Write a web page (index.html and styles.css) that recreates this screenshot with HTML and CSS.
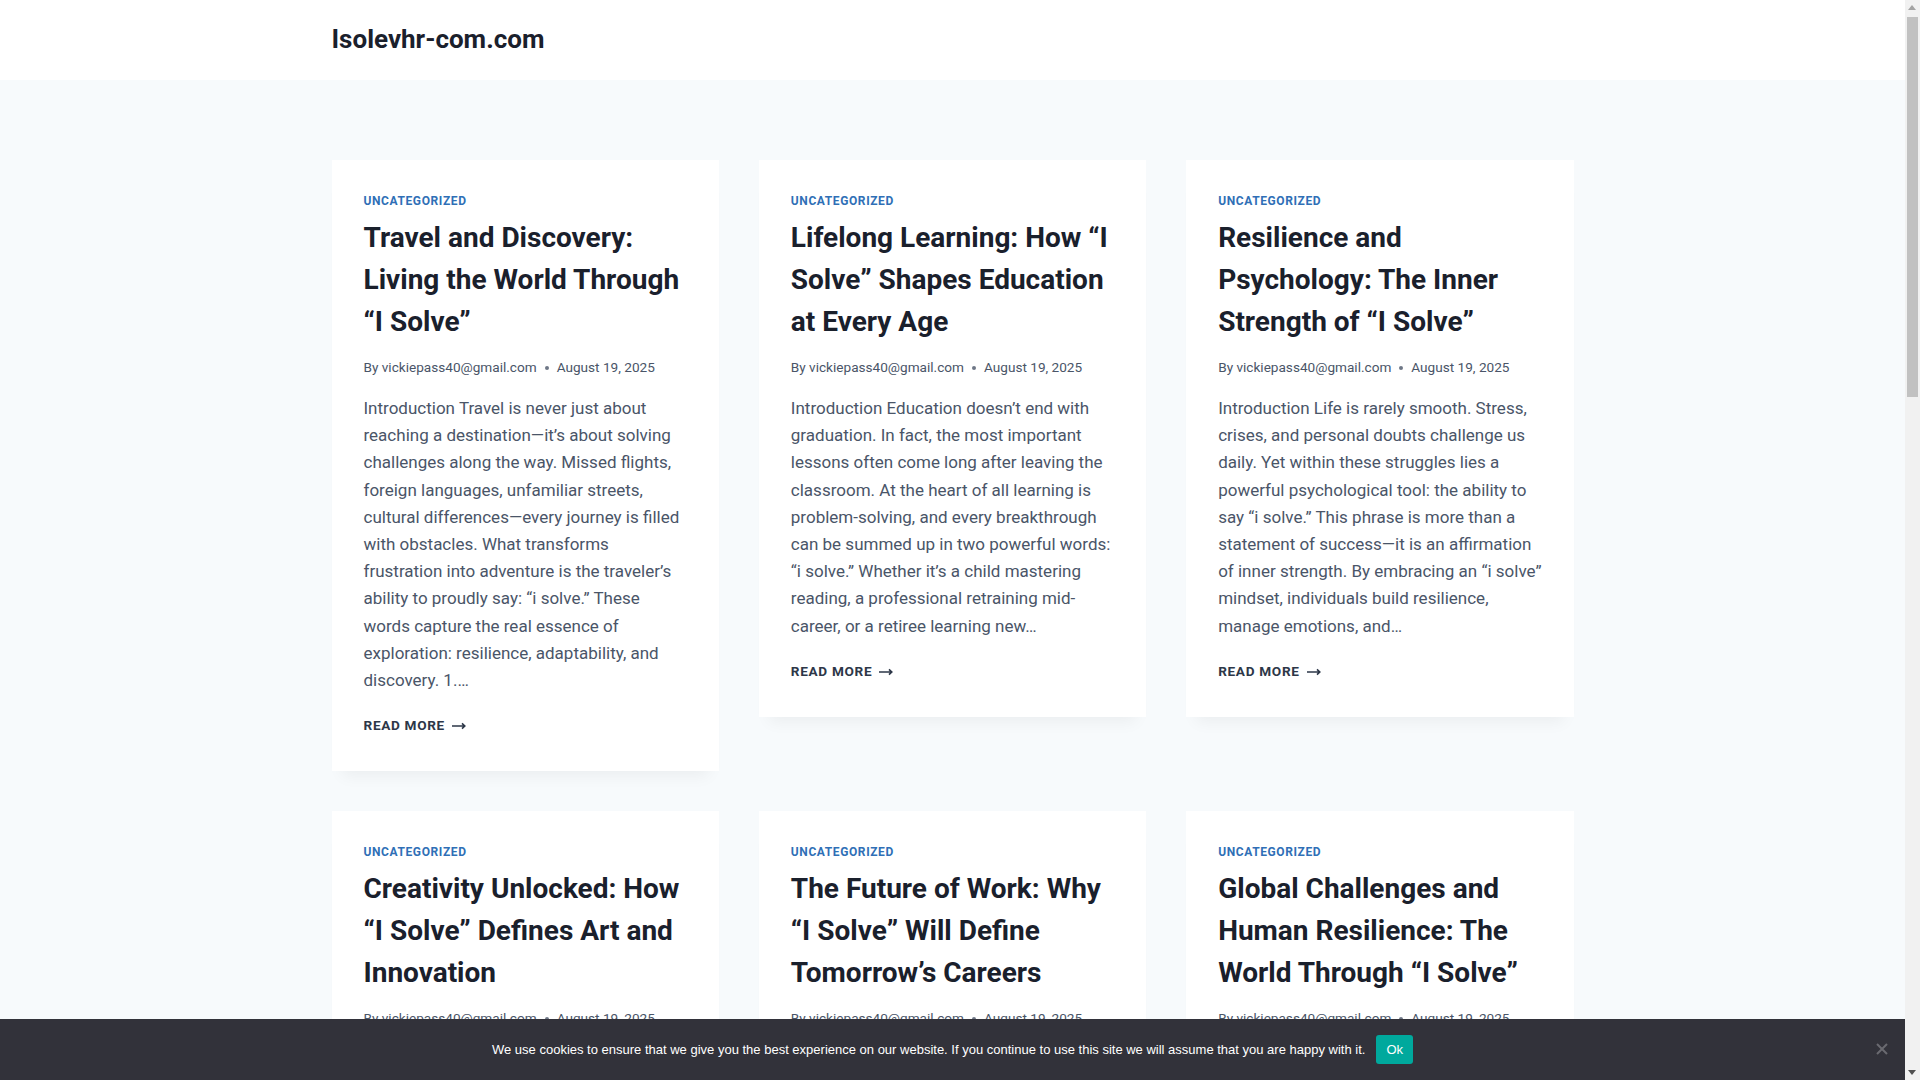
FILE: index.html
```html
<!DOCTYPE html>
<html lang="en">
<head>
<meta charset="utf-8">
<title>Isolevhr-com.com</title>
<link rel="stylesheet" href="styles.css">
</head>
<body>
<div class="page">
<header class="site-header">
  <div class="container header-inner">
    <a class="site-title" href="#">Isolevhr-com.com</a>
  </div>
</header>

<main class="site-main">
  <div class="container">
    <div class="post-grid">

      <article class="card">
        <div class="cat">Uncategorized</div>
        <h2 class="entry-title">Travel and Discovery: Living the World Through “I Solve”</h2>
        <div class="meta"><span>By vickiepass40@gmail.com</span><span class="dot"></span><span>August 19, 2025</span></div>
        <p class="excerpt">Introduction Travel is never just about reaching a destination—it’s about solving challenges along the way. Missed flights, foreign languages, unfamiliar streets, cultural differences—every journey is filled with obstacles. What transforms frustration into adventure is the traveler’s ability to proudly say: “i solve.” These words capture the real essence of exploration: resilience, adaptability, and discovery. 1.…</p>
        <div class="more"><span>Read More</span><svg class="arrow" viewBox="0 0 14 8" width="14" height="8"><path d="M0 4h12.8M10 1.3l2.8 2.7-2.8 2.7" fill="none" stroke="currentColor" stroke-width="1.6"/></svg></div>
      </article>

      <article class="card">
        <div class="cat">Uncategorized</div>
        <h2 class="entry-title">Lifelong Learning: How “I Solve” Shapes Education at Every Age</h2>
        <div class="meta"><span>By vickiepass40@gmail.com</span><span class="dot"></span><span>August 19, 2025</span></div>
        <p class="excerpt">Introduction Education doesn’t end with graduation. In fact, the most important lessons often come long after leaving the classroom. At the heart of all learning is problem-solving, and every breakthrough can be summed up in two powerful words: “i solve.” Whether it’s a child mastering reading, a professional retraining mid-career, or a retiree learning new…</p>
        <div class="more"><span>Read More</span><svg class="arrow" viewBox="0 0 14 8" width="14" height="8"><path d="M0 4h12.8M10 1.3l2.8 2.7-2.8 2.7" fill="none" stroke="currentColor" stroke-width="1.6"/></svg></div>
      </article>

      <article class="card">
        <div class="cat">Uncategorized</div>
        <h2 class="entry-title">Resilience and Psychology: The Inner Strength of “I Solve”</h2>
        <div class="meta"><span>By vickiepass40@gmail.com</span><span class="dot"></span><span>August 19, 2025</span></div>
        <p class="excerpt">Introduction Life is rarely smooth. Stress, crises, and personal doubts challenge us daily. Yet within these struggles lies a powerful psychological tool: the ability to say “i solve.” This phrase is more than a statement of success—it is an affirmation of inner strength. By embracing an “i solve” mindset, individuals build resilience, manage emotions, and…</p>
        <div class="more"><span>Read More</span><svg class="arrow" viewBox="0 0 14 8" width="14" height="8"><path d="M0 4h12.8M10 1.3l2.8 2.7-2.8 2.7" fill="none" stroke="currentColor" stroke-width="1.6"/></svg></div>
      </article>

      <article class="card">
        <div class="cat">Uncategorized</div>
        <h2 class="entry-title">Creativity Unlocked: How “I Solve” Defines Art and Innovation</h2>
        <div class="meta"><span>By vickiepass40@gmail.com</span><span class="dot"></span><span>August 19, 2025</span></div>
        <p class="excerpt">Introduction Creativity is often seen as a gift, but at its core it is a form of problem-solving. Every painting, song, invention, and design begins with a question and ends with an answer. Behind every creative breakthrough lies the quiet confidence of two words: “i solve.” Artists and innovators alike turn obstacles into opportunities, and…</p>
        <div class="more"><span>Read More</span><svg class="arrow" viewBox="0 0 14 8" width="14" height="8"><path d="M0 4h12.8M10 1.3l2.8 2.7-2.8 2.7" fill="none" stroke="currentColor" stroke-width="1.6"/></svg></div>
      </article>

      <article class="card">
        <div class="cat">Uncategorized</div>
        <h2 class="entry-title">The Future of Work: Why “I Solve” Will Define Tomorrow’s Careers</h2>
        <div class="meta"><span>By vickiepass40@gmail.com</span><span class="dot"></span><span>August 19, 2025</span></div>
        <p class="excerpt">Introduction The world of work is changing faster than ever. Automation, artificial intelligence, and global connectivity are reshaping industries and redefining careers. In this new landscape, the most valuable skill is not a single technical ability but the mindset captured in two words: “i solve.” Workers who can adapt, learn, and…</p>
        <div class="more"><span>Read More</span><svg class="arrow" viewBox="0 0 14 8" width="14" height="8"><path d="M0 4h12.8M10 1.3l2.8 2.7-2.8 2.7" fill="none" stroke="currentColor" stroke-width="1.6"/></svg></div>
      </article>

      <article class="card">
        <div class="cat">Uncategorized</div>
        <h2 class="entry-title">Global Challenges and Human Resilience: The World Through “I Solve”</h2>
        <div class="meta"><span>By vickiepass40@gmail.com</span><span class="dot"></span><span>August 19, 2025</span></div>
        <p class="excerpt">Introduction Climate change, pandemics, poverty, and conflict are challenges that no single nation can face alone. Yet throughout history, humanity has proven its ability to overcome even the greatest obstacles. At the heart of this resilience lies a simple but powerful declaration: “i solve.” When communities unite around solutions, progress…</p>
        <div class="more"><span>Read More</span><svg class="arrow" viewBox="0 0 14 8" width="14" height="8"><path d="M0 4h12.8M10 1.3l2.8 2.7-2.8 2.7" fill="none" stroke="currentColor" stroke-width="1.6"/></svg></div>
      </article>

    </div>
  </div>
</main>
</div>

<div class="cookie-bar">
  <div class="cookie-inner">
    <span class="cookie-text">We use cookies to ensure that we give you the best experience on our website. If you continue to use this site we will assume that you are happy with it.</span>
    <a class="cookie-btn" href="#">Ok</a>
  </div>
  <span class="cookie-close"><svg viewBox="0 0 12 12" width="12" height="12"><path d="M1 1l10 10M11 1L1 11" stroke="currentColor" stroke-width="2" fill="none"/></svg></span>
</div>

<div class="fake-scrollbar" aria-hidden="true">
  <span class="sb-arrow sb-up"></span>
  <span class="sb-thumb"></span>
  <span class="sb-arrow sb-down"></span>
</div>
</body>
</html>
```

FILE: styles.css
```css
* { box-sizing: border-box; }

html, body {
  margin: 0;
  padding: 0;
}

body {
  background: #f7fafc;
  font-family: Roboto, "Liberation Sans", sans-serif;
  font-size: 17px;
  line-height: 1.6;
  color: #4a5568;
}

.page {
  margin-right: 15px;
}

a { text-decoration: none; color: inherit; }

.container {
  max-width: 1290px;
  margin: 0 auto;
  padding: 0 24px;
}

.site-header {
  background: #ffffff;
  height: 80px;
}

.header-inner {
  height: 80px;
  display: flex;
  align-items: center;
}

.site-title {
  font-size: 26px;
  font-weight: 700;
  color: #1a202c;
  line-height: 1.2;
}

.site-main {
  padding: 80px 0 80px;
}

.post-grid {
  display: grid;
  grid-template-columns: repeat(3, 1fr);
  column-gap: 40px;
  row-gap: 40px;
  align-items: start;
}

.card {
  background: #ffffff;
  padding: 32px;
  box-shadow: 0 15px 15px -10px rgba(0, 0, 0, 0.05);
}

.cat {
  font-size: 12px;
  line-height: 19.2px;
  font-weight: 700;
  text-transform: uppercase;
  letter-spacing: 0.05em;
  color: #2f6fb6;
}

.entry-title {
  margin: 6px 0 0;
  font-size: 28px;
  line-height: 42px;
  font-weight: 700;
  color: #1a202c;
}

.meta {
  margin-top: 14px;
  display: flex;
  align-items: center;
  font-size: 13.6px;
  line-height: 21.8px;
  color: #4a5568;
}

.dot {
  width: 4px;
  height: 4px;
  border-radius: 50%;
  background: currentColor;
  opacity: 0.8;
  margin: 0 8px;
}

.excerpt {
  margin: 16px 0 0;
  font-size: 17px;
  line-height: 27.2px;
  color: #4a5568;
}

.more {
  margin-top: 19px;
  height: 26px;
  display: flex;
  align-items: center;
  gap: 7px;
  font-size: 13.6px;
  font-weight: 700;
  text-transform: uppercase;
  letter-spacing: 0.05em;
  color: #2d3748;
}

.arrow { display: block; }

.cookie-bar {
  position: fixed;
  left: 0;
  right: 15px;
  bottom: 0;
  height: 61px;
  background: #32323a;
  display: flex;
  align-items: center;
  justify-content: center;
  font-family: "Liberation Sans", Arial, sans-serif;
  font-size: 13px;
  color: #ffffff;
}

.cookie-inner {
  display: flex;
  align-items: center;
}

.cookie-text {
  line-height: 21px;
}

.cookie-btn {
  margin-left: 11px;
  background: #00a99d;
  color: #ffffff;
  padding: 8px 10px;
  line-height: 13px;
  border-radius: 3px;
}

.cookie-close {
  position: absolute;
  right: 17px;
  top: 24px;
  color: #6a6a70;
  display: block;
  width: 12px;
  height: 12px;
}

.cookie-close svg { display: block; }

.fake-scrollbar {
  position: fixed;
  top: 0;
  right: 0;
  bottom: 0;
  width: 15px;
  background: #f1f1f1;
}

.sb-arrow {
  position: absolute;
  left: 3px;
  width: 0;
  height: 0;
  border-left: 4.5px solid transparent;
  border-right: 4.5px solid transparent;
}

.sb-up {
  top: 5px;
  border-bottom: 5px solid #a3a3a3;
}

.sb-down {
  bottom: 5px;
  border-top: 5px solid #505050;
}

.sb-thumb {
  position: absolute;
  top: 17px;
  left: 2px;
  right: 2px;
  height: 380px;
  background: #c1c1c1;
}
```
